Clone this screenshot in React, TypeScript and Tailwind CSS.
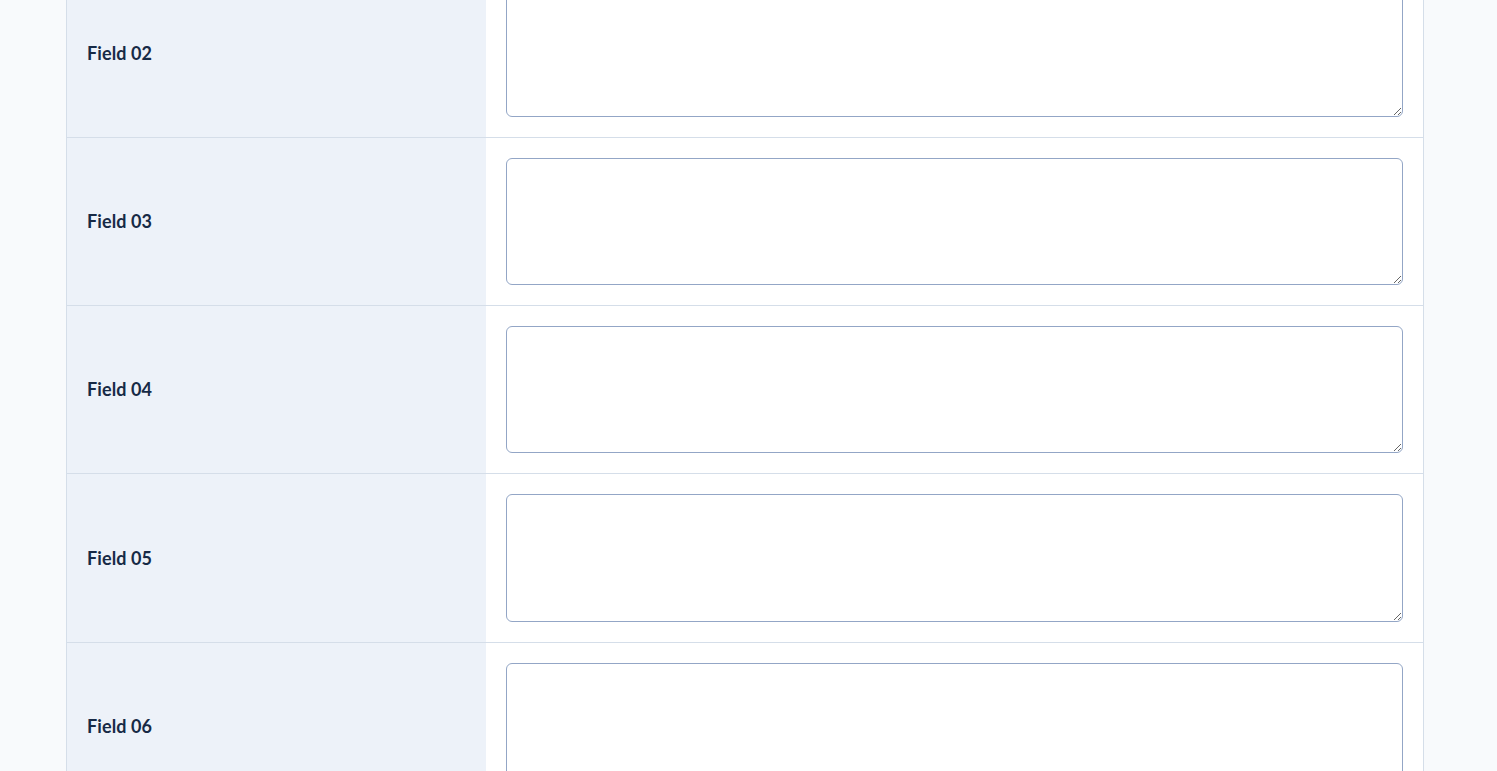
import React from 'react';

const fields = ['Field 02', 'Field 03', 'Field 04', 'Field 05', 'Field 06'];

export default function App() {
  // page is shown scrolled part way down, so the first row starts above the viewport
  return (
    <div className="h-[771px] overflow-hidden bg-[#f8fafc]" style={{ fontFamily: 'Lato, "Noto Sans", sans-serif' }}>
      <div className="ml-[66px] w-[1358px] -mt-[30.5px] border-x border-[#d5dee9] bg-white">
        {fields.map((name) => (
          <div key={name} className="flex border-b border-[#d5dee9]">
            <div className="w-[419px] shrink-0 bg-[#edf2f9] pl-5 flex items-center">
              <span className="text-[18px] font-bold text-[#172a46] tracking-[0.1px]">{name}</span>
            </div>
            <div className="flex-1 p-5">
              <textarea
                className="block w-full h-[127.33px] rounded-[6px] border border-[#93a6c6] bg-white resize-y focus:outline-none"
              />
            </div>
          </div>
        ))}
      </div>
    </div>
  );
}
